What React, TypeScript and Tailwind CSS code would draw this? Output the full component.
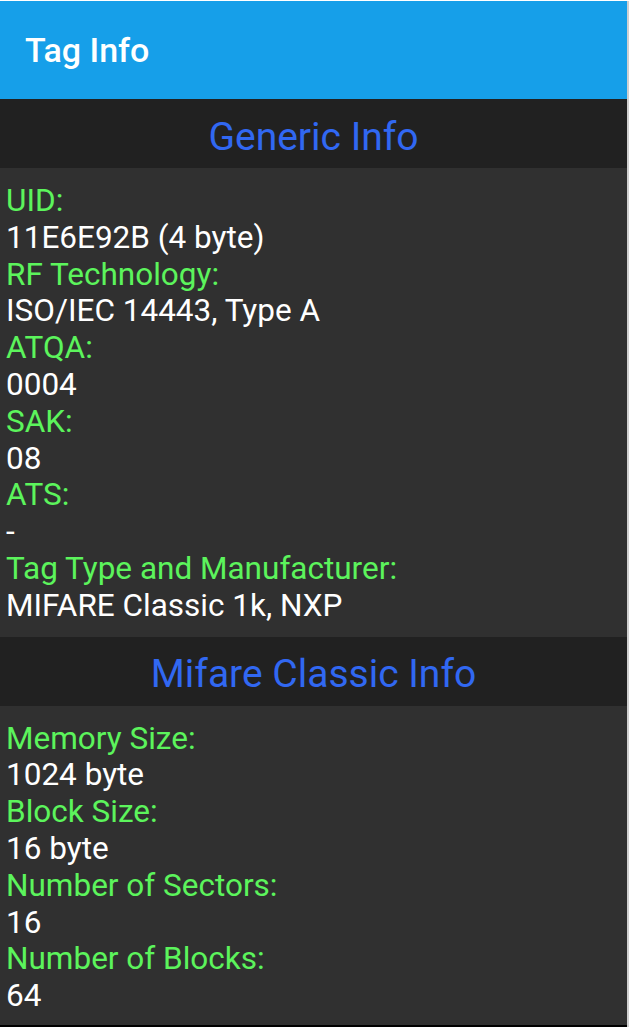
const sections = [
  {
    title: "Generic Info",
    rows: [
      ["UID:", "11E6E92B (4 byte)"],
      ["RF Technology:", "ISO/IEC 14443, Type A"],
      ["ATQA:", "0004"],
      ["SAK:", "08"],
      ["ATS:", "-"],
      ["Tag Type and Manufacturer:", "MIFARE Classic 1k, NXP"],
    ],
    pad: "pt-[15px] pb-[12px]",
  },
  {
    title: "Mifare Classic Info",
    rows: [
      ["Memory Size:", "1024 byte"],
      ["Block Size:", "16 byte"],
      ["Number of Sectors:", "16"],
      ["Number of Blocks:", "64"],
    ],
    pad: "pt-[15px] pb-[10px]",
  },
];

export default function App() {
  return (
    <div
      className="w-[629px] h-[1033px] bg-white pt-px"
      style={{fontFamily: "Roboto, 'Liberation Sans', sans-serif"}}
    >
      <div className="w-[627px] border-r-2 border-[#d0d0d0] box-content">
        {/* TOOLBAR */}
        <div className="h-[98px] bg-[#169fe9] flex items-center pl-[25px]">
          <h1 className="text-[34px] font-medium text-white">Tag Info</h1>
        </div>
        {sections.map((section) => (
          <div key={section.title}>
            <div className="h-[69px] bg-[#212121] flex items-center justify-center pt-[7px]">
              <h2 className="text-[39px] leading-none text-[#3168f2]">{section.title}</h2>
            </div>
            <div className={`bg-[#303030] px-[6px] ${section.pad}`}>
              {section.rows.map(([label, value]) => (
                <div key={label} className="text-[31.5px] leading-[36.8px]">
                  <div className="text-[#5cf45c]">{label}</div>
                  <div className="text-white">{value}</div>
                </div>
              ))}
            </div>
          </div>
        ))}
        <div className="h-[2px] bg-black" />
      </div>
    </div>
  );
}
